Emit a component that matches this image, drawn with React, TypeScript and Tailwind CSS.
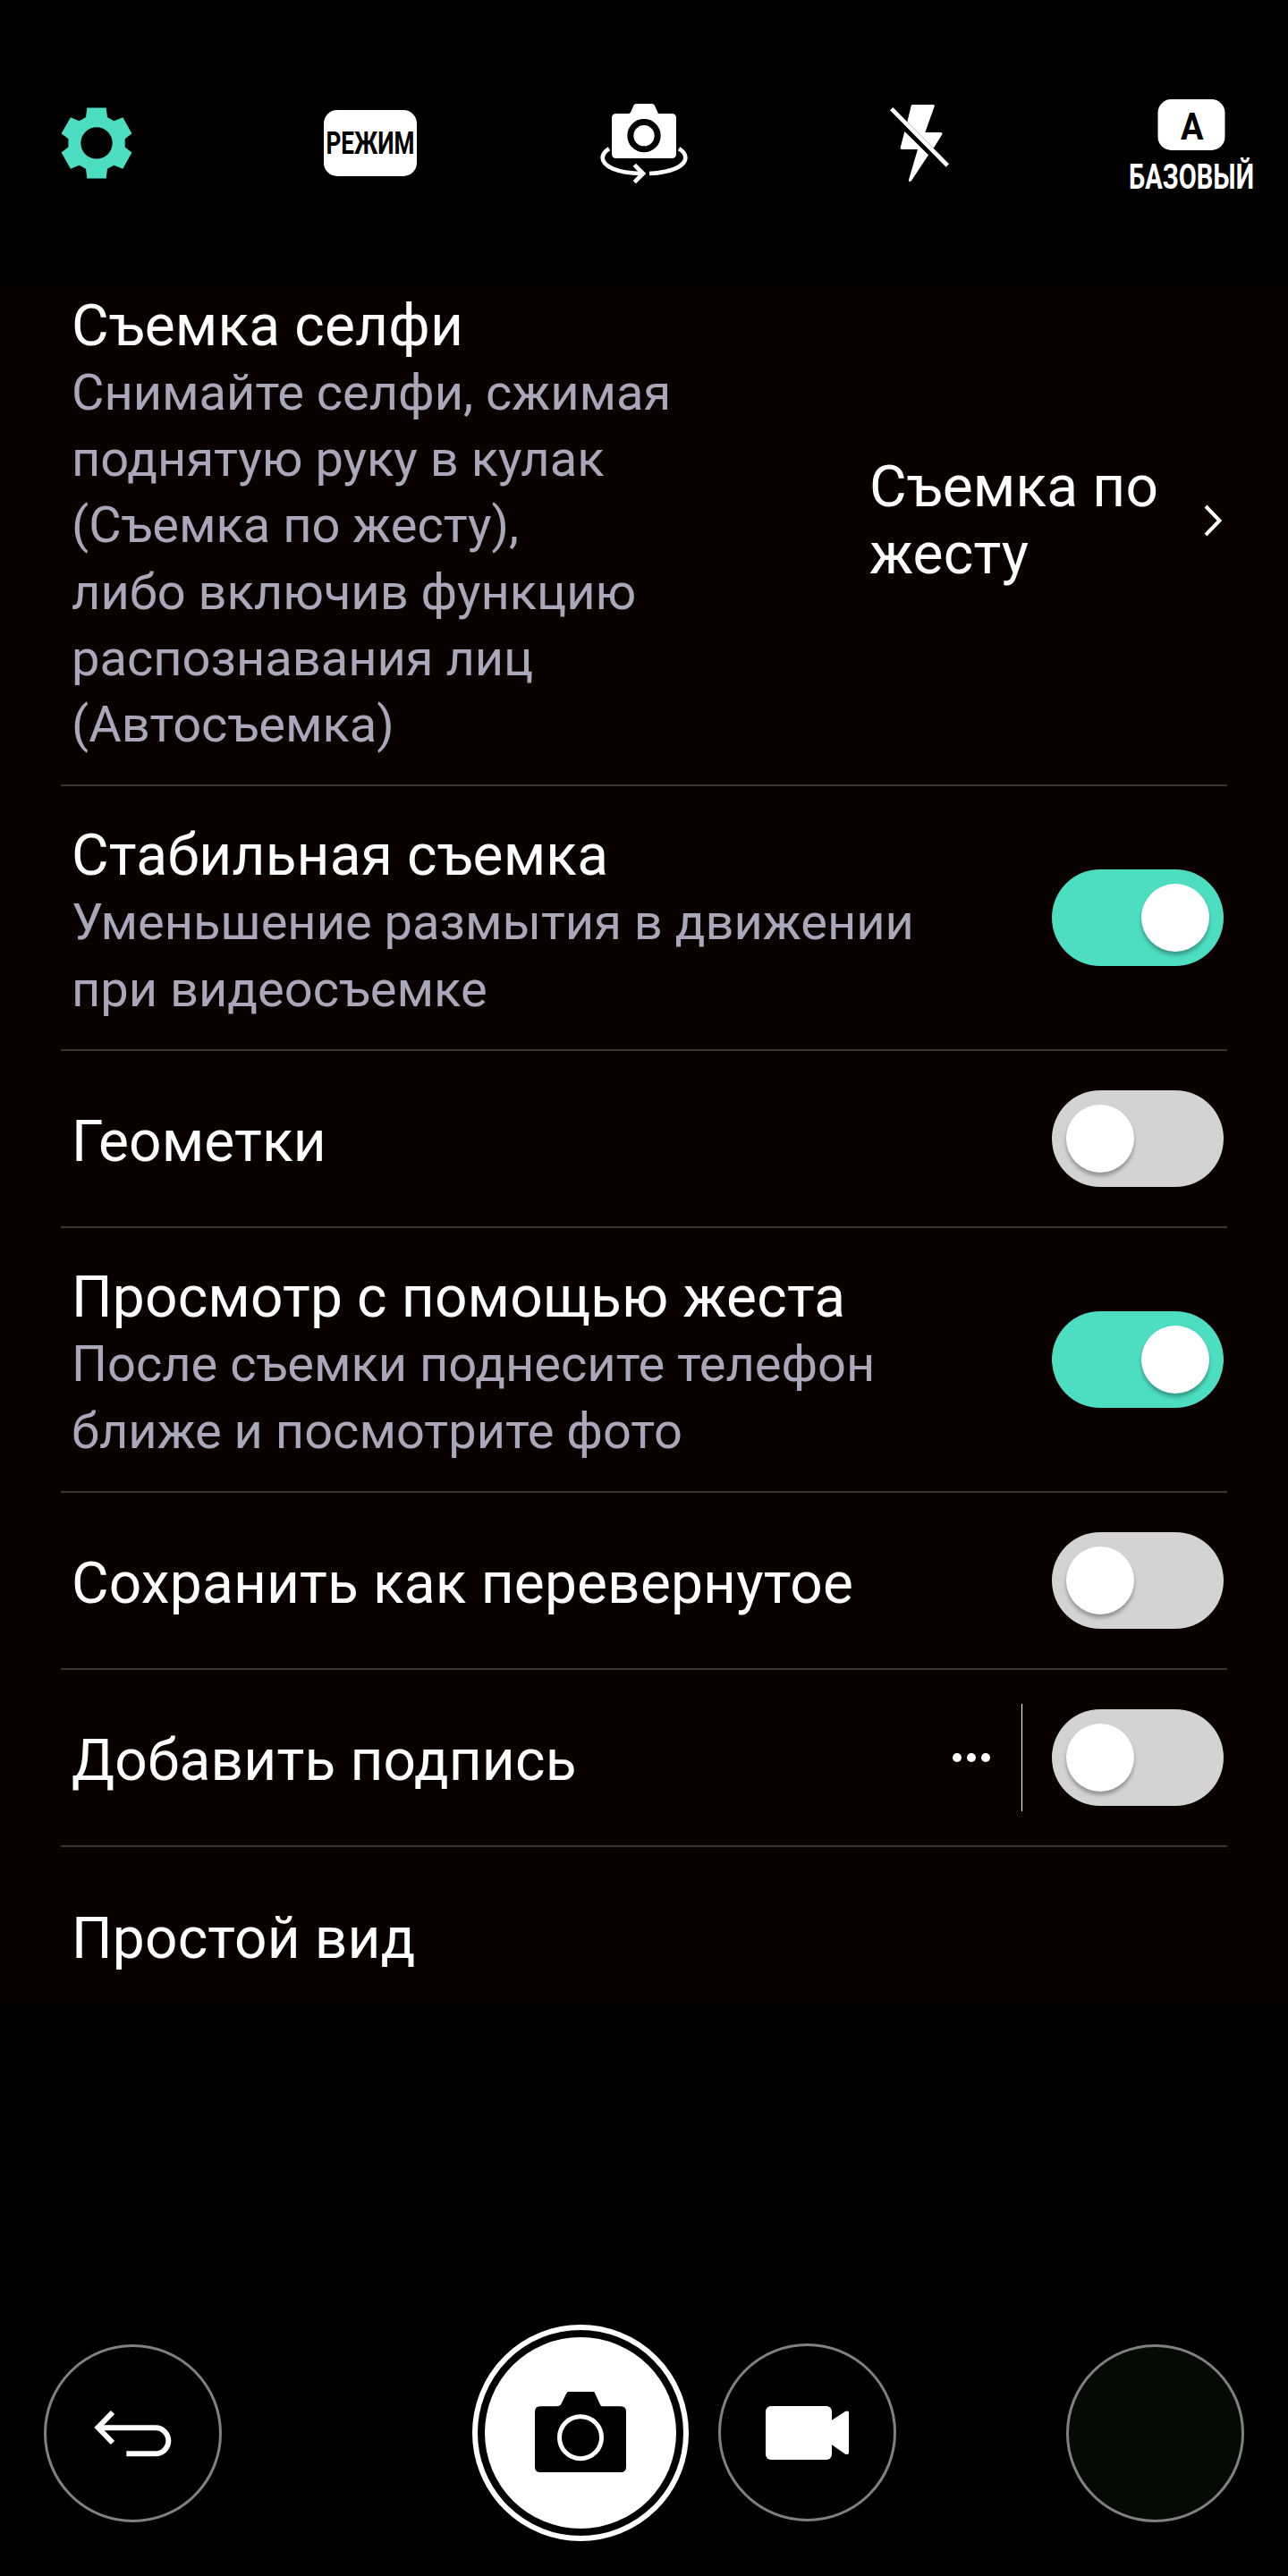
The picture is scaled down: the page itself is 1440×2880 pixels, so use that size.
import React, { useState } from "react";

type Setting = {
  id: string;
  title: string;
  description?: string;
  value?: string;
  toggle?: boolean;
  more?: boolean;
};

const settings: Setting[] = [
  {
    id: "selfie",
    title: "Съемка селфи",
    description:
      "Снимайте селфи, сжимая\nподнятую руку в кулак\n(Съемка по жесту),\nлибо включив функцию\nраспознавания лиц\n(Автосъемка)",
    value: "Съемка по\nжесту",
  },
  {
    id: "steady",
    title: "Стабильная съемка",
    description: "Уменьшение размытия в движении\nпри видеосъемке",
    toggle: true,
  },
  { id: "geotags", title: "Геометки", toggle: true },
  {
    id: "gesture-view",
    title: "Просмотр с помощью жеста",
    description: "После съемки поднесите телефон\nближе и посмотрите фото",
    toggle: true,
  },
  { id: "flipped", title: "Сохранить как перевернутое", toggle: true },
  { id: "signature", title: "Добавить подпись", toggle: true, more: true },
  { id: "simple", title: "Простой вид" },
];

function GearIcon() {
  return (
    <svg width="80" height="80" viewBox="0 0 80 80" fill="#4ddec2">
      <path
        fillRule="evenodd"
        d="M29.3 .4H50.7L52 11L59.3 15.3L69.3 11.3L79.4 29.3L71.7 35.3V44.5L79.4 50.5L69.3 68.7L59.3 64.7L52 68.7L50.7 79.4H29.3L28 68.7L20.7 64.7L10.9 68.7L.6 50.5L8.4 44.5V35.3L.6 29.3L10.9 11.3L20.7 15.3L28 11ZM40 22.2A17.7 17.7 0 1 0 40 57.6A17.7 17.7 0 1 0 40 22.2Z"
      />
    </svg>
  );
}

function ModeIcon() {
  return (
    <svg
      width="104"
      height="74"
      viewBox="0 0 104 74"
      className="overflow-visible"
    >
      <rect width="104" height="74" rx="15" fill="#fff" />
      <text
        x="2.5"
        y="49"
        fontSize="35.5"
        textLength="99"
        lengthAdjust="spacingAndGlyphs"
        className="font-bold"
      >
        РЕЖИМ
      </text>
    </svg>
  );
}

function SwitchCameraIcon() {
  return (
    <svg width="100" height="92" viewBox="90 72 300 276" fill="none">
      <path
        fill="#fff"
        d="M147 111H187C192 111 194 109 196 105L205 85C207 80 210 78 215 78H266C271 78 274 80 276 85L288 111H333Q348 111 348 126V246Q348 261 333 261H147Q132 261 132 246V126Q132 111 147 111Z"
      />
      <circle cx="240" cy="185" r="45.5" stroke="#000" strokeWidth="21" />
      <g stroke="#fff" strokeWidth="14">
        <path d="M123 229C108 238 102 248 101 259C101 288 150 310 232 312" />
        <path d="M357 229C373 238 379 248 379 259C379 286 334 308 258 312" />
        <path d="M208 283L237 312L208 341" />
      </g>
    </svg>
  );
}

function FlashOffIcon() {
  return (
    <svg width="72" height="92" viewBox="1050 72 216 276" fill="#fff">
      <path d="M1141 81H1210Q1216 81 1214 87L1183 174H1236Q1243 175 1239 182L1211 227L1123 139L1136 85Q1137 81 1141 81Z" />
      <path d="M1114 171L1194 250L1137 336Q1134 340 1130 339Q1127 338 1128 333L1158 231H1104Q1099 230 1100 225Z" />
      <path d="M1070 95L1258 285" stroke="#fff" strokeWidth="14" />
    </svg>
  );
}

function BasicIcon() {
  return (
    <svg
      width="144"
      height="104"
      viewBox="0 0 144 104"
      className="overflow-visible"
    >
      <rect x="34.5" y="3" width="75" height="57" rx="15" fill="#fff" />
      <text
        x="60"
        y="47.7"
        fontSize="43"
        textLength="25.5"
        lengthAdjust="spacingAndGlyphs"
        className="font-bold"
      >
        А
      </text>
      <text
        x="2"
        y="102.5"
        fontSize="39.5"
        fill="#fff"
        textLength="140"
        lengthAdjust="spacingAndGlyphs"
        className="font-bold"
      >
        БАЗОВЫЙ
      </text>
    </svg>
  );
}

function BackIcon() {
  return (
    <svg
      width="90"
      height="54"
      viewBox="221 341 270 162"
      fill="none"
      stroke="#fff"
      strokeWidth="18"
    >
      <path d="M240 402H430.5A43.5 43.5 0 0 1 430.5 489H333" />
      <path d="M287 350L237.5 401L287 452" />
    </svg>
  );
}

function ShutterIcon() {
  return (
    <svg width="104" height="92" viewBox="291 281 312 276">
      <path d="M312 330H367C376 330 379 328 383 321L399 288C402 282 405 279 412 279H485C492 279 494 283 497 289L512 322C515 328 517 330 523 330H582Q600 330 600 348V533Q600 551 582 551H312Q294 551 294 533V348Q294 330 312 330Z" />
      <circle
        cx="447"
        cy="434.5"
        r="70.5"
        fill="none"
        stroke="#fff"
        strokeWidth="15"
      />
    </svg>
  );
}

function VideoIcon() {
  return (
    <svg width="94" height="60" viewBox="1068 330 282 180" fill="#fff">
      <rect x="1068" y="330" width="222" height="180" rx="18" />
      <path d="M1288 379L1335 348Q1347 343 1347 352V486Q1347 495 1335 491L1288 458Z" />
    </svg>
  );
}

function Toggle({
  label,
  checked,
  onChange,
}: {
  label: string;
  checked: boolean;
  onChange: () => void;
}) {
  return (
    <button
      role="switch"
      aria-label={label}
      aria-checked={checked}
      onClick={onChange}
      className={`flex h-[108px] w-48 shrink-0 items-center rounded-full px-4 ${
        checked ? "justify-end bg-[#4ddec2]" : "justify-start bg-[#d3d3d3]"
      }`}
    >
      <span className="size-[76px] rounded-full bg-white shadow-[0_4px_4px_rgba(0,0,0,0.3)]" />
    </button>
  );
}

function App() {
  const [enabled, setEnabled] = useState<Record<string, boolean>>({
    steady: true,
    "gesture-view": true,
  });

  return (
    <div className="flex h-[2880px] w-[1440px] flex-col bg-black font-['Roboto',sans-serif] text-white">
      {/* camera toolbar */}
      <div className="flex h-80 shrink-0 items-center justify-between px-9">
        <button className="flex w-36 justify-center" aria-label="Настройки">
          <GearIcon />
        </button>
        <button className="flex w-36 justify-center">
          <ModeIcon />
        </button>
        <button className="flex w-36 justify-center" aria-label="Камера">
          <SwitchCameraIcon />
        </button>
        <button className="flex w-36 justify-center" aria-label="Вспышка">
          <FlashOffIcon />
        </button>
        <button className="flex w-36 justify-center">
          <BasicIcon />
        </button>
      </div>

      {/* settings list, scrolled slightly under the toolbar */}
      <div className="h-[1920px] shrink-0 overflow-hidden bg-[#090100] px-[68px]">
        <div className="-mt-[33px]">
          {settings.map((item) => (
            <div
              key={item.id}
              className={`flex items-center justify-between border-b-2 border-[#3a3432] pr-1 pl-3 last:border-b-0 ${
                item.value
                  ? "h-[592px]"
                  : item.description
                    ? "h-[296px]"
                    : "h-[198px]"
              }`}
            >
              <div className={item.description ? "pt-2.5" : "pt-1.5"}>
                <h3 className="text-[64px] leading-[75px] tracking-[0.18px]">
                  {item.title}
                </h3>
                {item.description && (
                  <p className="text-[56px] leading-[74.2px] whitespace-pre text-[#aba7bb]">
                    {item.description}
                  </p>
                )}
              </div>

              {item.value && (
                <div className="flex w-[396px] items-center justify-between">
                  <span className="text-[64px] leading-[75px] tracking-[0.18px] whitespace-pre">
                    {item.value}
                  </span>
                  <svg
                    width="22"
                    height="36"
                    viewBox="0 0 22 36"
                    fill="none"
                    stroke="#fff"
                    strokeWidth="4"
                  >
                    <path d="M2 2L17.5 18L2 34" />
                  </svg>
                </div>
              )}

              {item.toggle && (
                <div className="flex items-center">
                  {item.more && (
                    <>
                      <div className="mr-[35px] flex gap-1.5">
                        <span className="size-2.5 rounded-full bg-white" />
                        <span className="size-2.5 rounded-full bg-white" />
                        <span className="size-2.5 rounded-full bg-white" />
                      </div>
                      <div className="mr-[33px] h-[120px] w-px bg-white" />
                    </>
                  )}
                  <Toggle
                    label={item.title}
                    checked={!!enabled[item.id]}
                    onChange={() =>
                      setEnabled({ ...enabled, [item.id]: !enabled[item.id] })
                    }
                  />
                </div>
              )}
            </div>
          ))}
        </div>
      </div>

      {/* shutter controls */}
      <div className="mt-[359px] flex items-start pl-[49px]">
        <button
          aria-label="Назад"
          className="mt-[22px] flex size-[199px] items-center justify-center rounded-full border-3 border-[#808080]"
        >
          <BackIcon />
        </button>
        <button
          aria-label="Фото"
          className="ml-[280px] size-[242px] rounded-full border-6 border-white p-2"
        >
          <span className="flex size-full items-center justify-center rounded-full bg-white">
            <ShutterIcon />
          </span>
        </button>
        <button
          aria-label="Видео"
          className="mt-[21px] ml-[33px] flex size-[199px] items-center justify-center rounded-full border-3 border-[#808080]"
        >
          <VideoIcon />
        </button>
        <button
          aria-label="Галерея"
          className="mt-[22px] ml-[190px] size-[199px] rounded-full border-3 border-[#808080] bg-[#050a05]"
        />
      </div>
    </div>
  );
}

export default App;
